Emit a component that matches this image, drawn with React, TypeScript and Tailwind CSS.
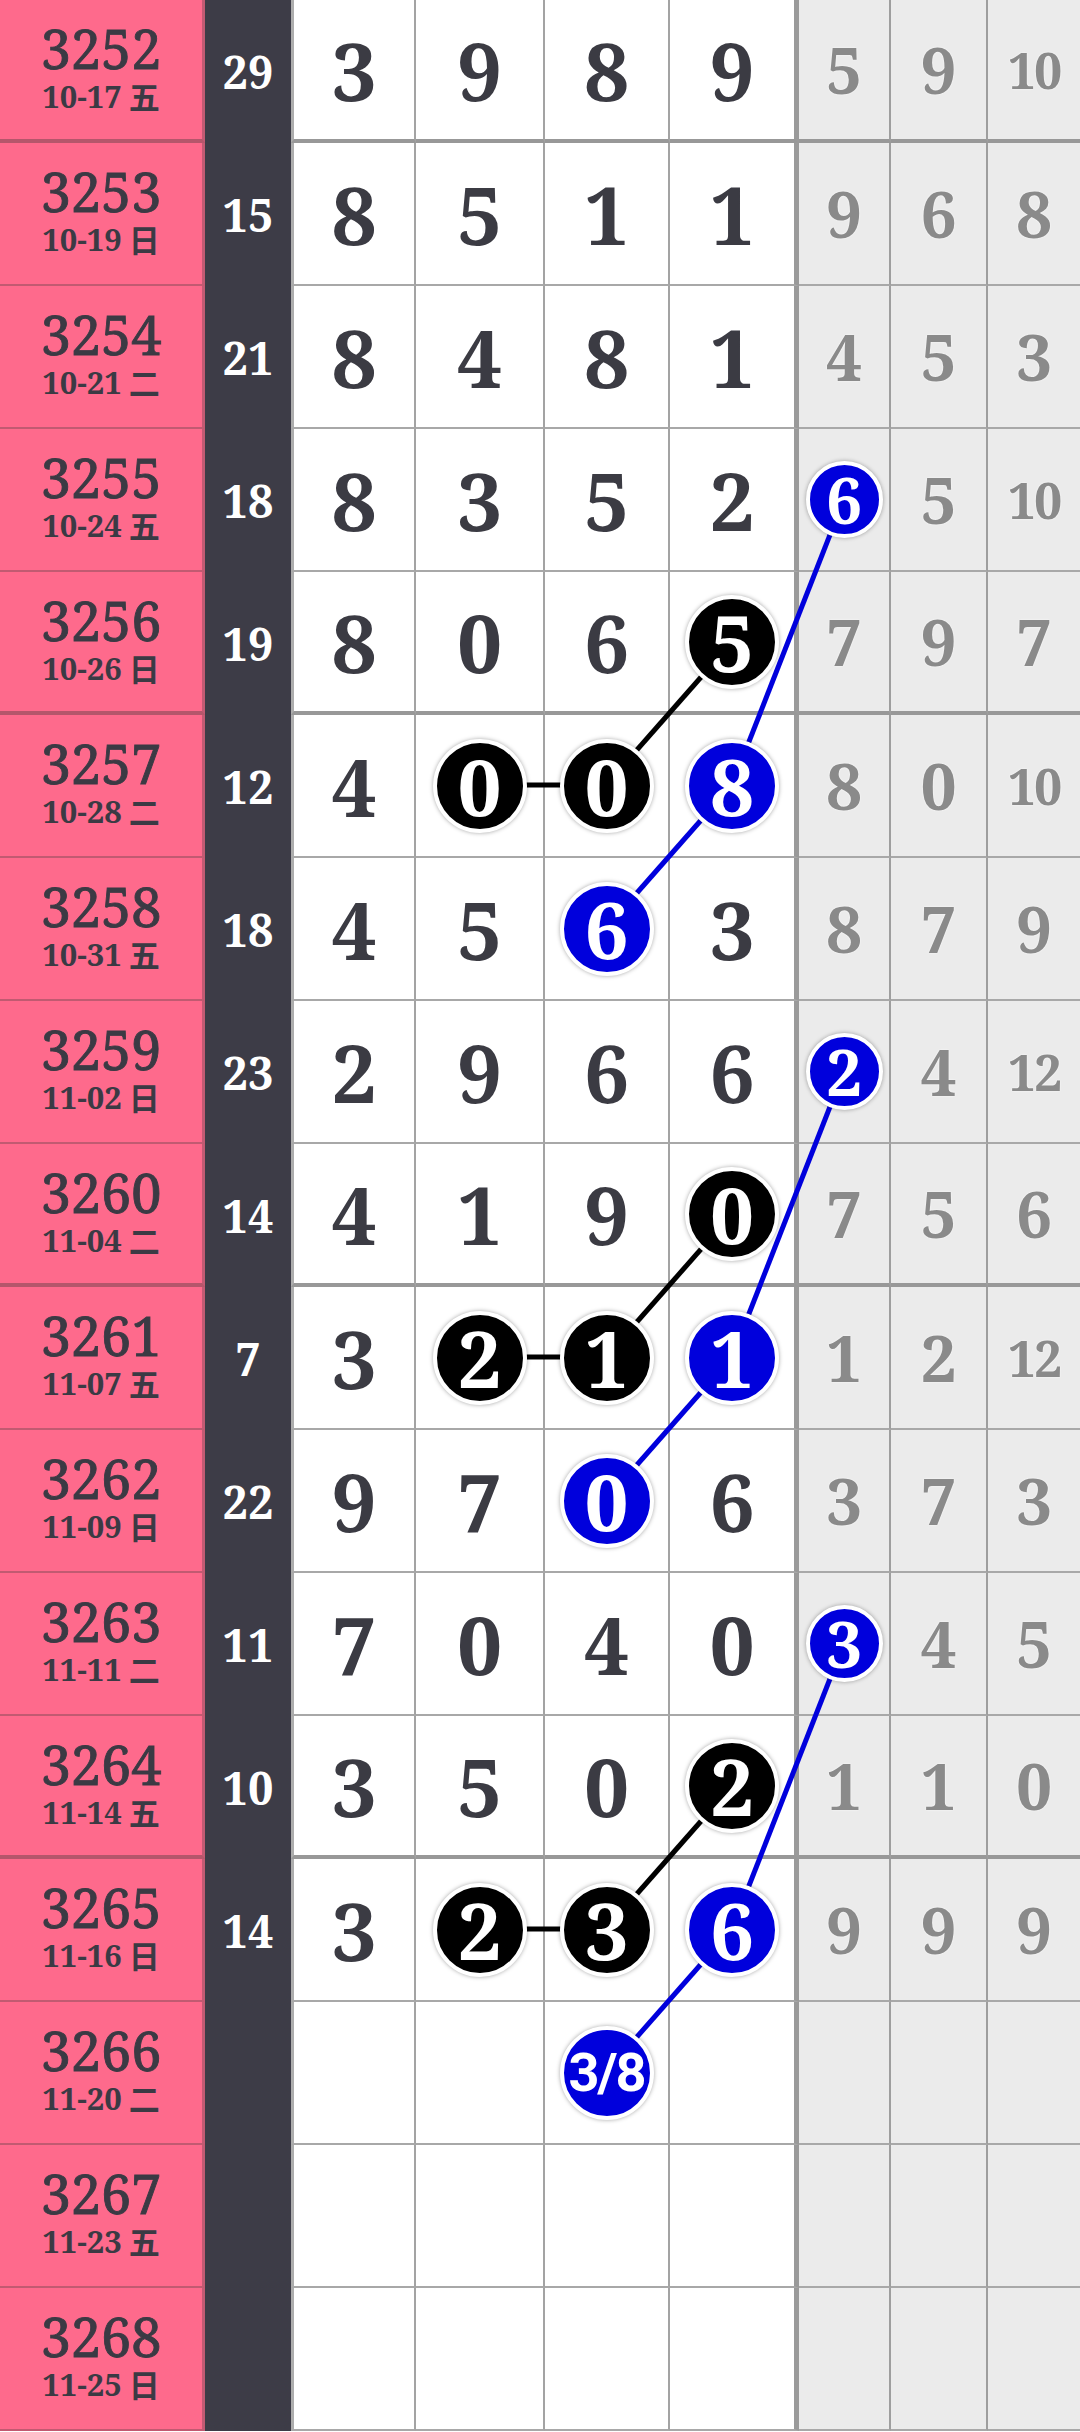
import React from 'react';

type Row = { no: string; date: string; wk: string; sum: string; main: string[]; miss: string[] };

const rows: Row[] = [
  { no: '3252', date: '10-17', wk: '五', sum: '29', main: ['3', '9', '8', '9'], miss: ['5', '9', '10'] },
  { no: '3253', date: '10-19', wk: '日', sum: '15', main: ['8', '5', '1', '1'], miss: ['9', '6', '8'] },
  { no: '3254', date: '10-21', wk: '二', sum: '21', main: ['8', '4', '8', '1'], miss: ['4', '5', '3'] },
  { no: '3255', date: '10-24', wk: '五', sum: '18', main: ['8', '3', '5', '2'], miss: ['6', '5', '10'] },
  { no: '3256', date: '10-26', wk: '日', sum: '19', main: ['8', '0', '6', '5'], miss: ['7', '9', '7'] },
  { no: '3257', date: '10-28', wk: '二', sum: '12', main: ['4', '0', '0', '8'], miss: ['8', '0', '10'] },
  { no: '3258', date: '10-31', wk: '五', sum: '18', main: ['4', '5', '6', '3'], miss: ['8', '7', '9'] },
  { no: '3259', date: '11-02', wk: '日', sum: '23', main: ['2', '9', '6', '6'], miss: ['2', '4', '12'] },
  { no: '3260', date: '11-04', wk: '二', sum: '14', main: ['4', '1', '9', '0'], miss: ['7', '5', '6'] },
  { no: '3261', date: '11-07', wk: '五', sum: '7', main: ['3', '2', '1', '1'], miss: ['1', '2', '12'] },
  { no: '3262', date: '11-09', wk: '日', sum: '22', main: ['9', '7', '0', '6'], miss: ['3', '7', '3'] },
  { no: '3263', date: '11-11', wk: '二', sum: '11', main: ['7', '0', '4', '0'], miss: ['3', '4', '5'] },
  { no: '3264', date: '11-14', wk: '五', sum: '10', main: ['3', '5', '0', '2'], miss: ['1', '1', '0'] },
  { no: '3265', date: '11-16', wk: '日', sum: '14', main: ['3', '2', '3', '6'], miss: ['9', '9', '9'] },
  { no: '3266', date: '11-20', wk: '二', sum: '', main: ['', '', '3/8', ''], miss: ['', '', ''] },
  { no: '3267', date: '11-23', wk: '五', sum: '', main: ['', '', '', ''], miss: ['', '', ''] },
  { no: '3268', date: '11-25', wk: '日', sum: '', main: ['', '', '', ''], miss: ['', '', ''] },
];

// k = black ball, b = blue ball ; key is row-col (col 0..3 main, 4..6 miss)
const marks: Record<string, 'k' | 'b'> = {
  '3-4': 'b', '4-3': 'k', '5-1': 'k', '5-2': 'k', '5-3': 'b', '6-2': 'b',
  '7-4': 'b', '8-3': 'k', '9-1': 'k', '9-2': 'k', '9-3': 'b', '10-2': 'b',
  '11-4': 'b', '12-3': 'k', '13-1': 'k', '13-2': 'k', '13-3': 'b', '14-2': 'b',
};

const blackLinks = [
  [4, 3, 5, 2], [5, 2, 5, 1], [8, 3, 9, 2], [9, 2, 9, 1], [12, 3, 13, 2], [13, 2, 13, 1],
];
const blueLinks = [
  [3, 4, 5, 3], [5, 3, 6, 2], [7, 4, 9, 3], [9, 3, 10, 2], [11, 4, 13, 3], [13, 3, 14, 2],
];

const cx = [354, 480, 606, 732, 844, 938, 1034];
const cy = (r: number) => r * 143 + 70;

const serif = "font-['Noto_Serif','DejaVu_Serif',serif]";

function Ball({ v, blue, small }: { v: string; blue: boolean; small: boolean }) {
  const slash = v.includes('/');
  return (
    <div
      className={`relative z-20 flex items-center justify-center rounded-full border-4 border-white shadow-[0_0_4px_rgba(0,0,0,0.35)] ${
        blue ? 'bg-[#0000dc]' : 'bg-black'
      } ${small ? 'h-[77px] w-[77px]' : 'h-[94px] w-[94px]'}`}
    >
      {slash ? (
        <span className="font-['Roboto','Liberation_Sans',sans-serif] text-[54px] leading-none font-bold tracking-[-2px] text-white">
          {v}
        </span>
      ) : (
        <span className={`${serif} ${small ? 'text-[64px]' : 'text-[78px]'} leading-none font-bold text-white`}>{v}</span>
      )}
    </div>
  );
}

const mainW = [
  'w-[125px] border-l-[3px] border-l-[#adadad] border-r-2 border-r-[#a3a3a3]',
  'w-[129px] border-r-2 border-r-[#a3a3a3]',
  'w-[125px] border-r-2 border-r-[#a3a3a3]',
  'w-[129px] border-r-[5px] border-r-[#9a9a9a]',
];
const missW = [
  'w-[92px] border-r-2 border-r-[#9e9e9e]',
  'w-[97px] border-r-2 border-r-[#9e9e9e]',
  'w-[92px]',
];

export default function App() {
  return (
    <div className="relative w-[1080px] overflow-hidden bg-white">
      {rows.map((row, r) => {
        const thick = r % 4 === 0 && r <= 12;
        const bb = thick ? 'border-b-4 border-b-[#989898]' : 'border-b-2 border-b-[#a8a8a8]';
        return (
          <div key={row.no} className="flex h-[143px]">
            <div
              className={`flex w-[205px] flex-col items-center justify-start border-r-[3px] border-r-[#c35a73] bg-[#fe6a8c] pt-[22px] text-[#3b3a44] ${
                thick ? 'border-b-4 border-b-[#b5566b]' : 'border-b-2 border-b-[#c15a71]'
              }`}
            >
              <span className={`${serif} text-[54px] leading-[52px] [-webkit-text-stroke:0.9px_#3b3a44]`}>{row.no}</span>
              <span className="mt-[6px] flex items-center gap-[7px] leading-[32px]">
                <span className={`${serif} text-[31px] font-bold`}>{row.date}</span>
                <span className="font-['Noto_Sans_CJK_SC',sans-serif] text-[31px] font-bold">{row.wk}</span>
              </span>
            </div>
            <div className="flex w-[86px] items-center justify-center bg-[#3d3c47]">
              <span className={`${serif} text-[45px] leading-none font-bold text-white`}>{row.sum}</span>
            </div>
            {row.main.map((v, c) => {
              const m = marks[`${r}-${c}`];
              return (
                <div key={c} className={`flex h-full items-center justify-center bg-white ${mainW[c]} ${bb}`}>
                  {m ? (
                    <Ball v={v} blue={m === 'b'} small={false} />
                  ) : (
                    <span className={`${serif} text-[80px] leading-none font-bold text-[#3b3b43]`}>{v}</span>
                  )}
                </div>
              );
            })}
            {row.miss.map((v, c) => {
              const m = marks[`${r}-${c + 4}`];
              return (
                <div key={c} className={`flex h-full items-center justify-center bg-[#ebebeb] ${missW[c]} ${bb}`}>
                  {m ? (
                    <Ball v={v} blue={m === 'b'} small />
                  ) : (
                    <span
                      className={`${serif} ${
                        v.length > 1 ? 'text-[50px] tracking-[-2px]' : 'text-[64px]'
                      } leading-none font-bold text-[#8a8a8a] [text-shadow:0_0_2px_#fff]`}
                    >
                      {v}
                    </span>
                  )}
                </div>
              );
            })}
          </div>
        );
      })}
      <svg className="pointer-events-none absolute inset-0 z-10" width="1080" height="2431">
        {blackLinks.map(([r1, c1, r2, c2], i) => (
          <line key={`k${i}`} x1={cx[c1]} y1={cy(r1)} x2={cx[c2]} y2={cy(r2)} stroke="#000" strokeWidth="5" />
        ))}
        {blueLinks.map(([r1, c1, r2, c2], i) => (
          <line key={`b${i}`} x1={cx[c1]} y1={cy(r1)} x2={cx[c2]} y2={cy(r2)} stroke="#0000dc" strokeWidth="5" />
        ))}
      </svg>
    </div>
  );
}
